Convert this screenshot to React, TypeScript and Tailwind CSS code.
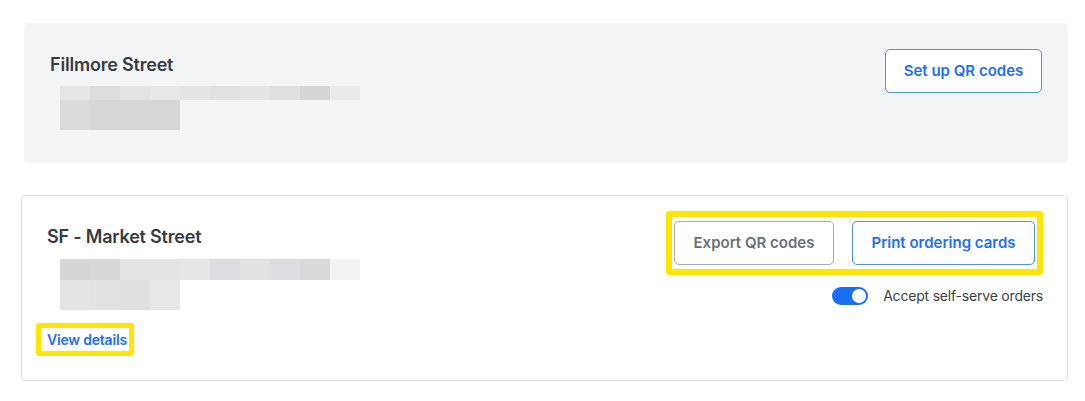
import React from "react";

const row1a = ["#e4e5e7", "#dcdddf", "#e3e4e6", "#e6e7e9", "#e3e4e6", "#e0e1e3", "#e3e4e6", "#dfe0e2", "#d5d6d8", "#e9eaec"];
const row2a = ["#dadbdd", "#d6d7d9", "#d6d7d9", "#d6d7d9"];
const row1b = ["#d5d6d8", "#d7d8da", "#e3e4e6", "#e3e4e6", "#e5e6e8", "#dcdde0", "#e1e2e4", "#dcdde0", "#d8d9db", "#f2f2f3"];
const row2b = ["#e3e4e6", "#e1e2e4", "#dfe0e2", "#e6e7e9"];

function Blocks({ r1, r2, h1 }: { r1: string[]; r2: string[]; h1: number }) {
  return (
    <div className="flex flex-col">
      <div className="flex">
        {r1.map((c, i) => (
          <div key={i} className="w-[30px]" style={{ backgroundColor: c, height: h1 }} />
        ))}
      </div>
      <div className="flex">
        {r2.map((c, i) => (
          <div key={i} className="w-[30px] h-[30px]" style={{ backgroundColor: c }} />
        ))}
      </div>
    </div>
  );
}

export default function App() {
  return (
    <div
      className="w-[1085px] h-[401px] bg-white pt-[23px] pl-[21px] pr-[17px]"
      style={{ fontFamily: "Inter, 'Noto Sans', sans-serif" }}
    >
      {/* Card 1 */}
      <div className="ml-[3px] h-[140px] rounded-[4px] bg-[#f4f5f7] pl-[26px] pr-[26px] pt-[26px] flex justify-between items-start">
        <div className="flex flex-col pt-[3px]">
          <div className="text-[18px] leading-[25px] font-semibold text-[#373c44] tracking-[-0.2px]">Fillmore Street</div>
          <div className="mt-[9px] ml-[10px]">
            <Blocks r1={row1a} r2={row2a} h1={14} />
          </div>
        </div>
        <button className="w-[157px] h-[44px] pt-[1px] rounded-[5px] border border-[#4d8df5] bg-white text-[15px] font-semibold text-[#1f6ff2]">
          Set up QR codes
        </button>
      </div>

      {/* Card 2 */}
      <div className="mt-[32px] h-[186px] rounded-[4px] border border-[#dcdee1] bg-white pl-[25px] pr-[24px] pt-[25px] flex justify-between items-start">
        <div className="flex flex-col pt-[3px]">
          <div className="text-[18px] leading-[25px] font-semibold text-[#373c44] tracking-[-0.2px]">SF - Market Street</div>
          <div className="mt-[10px] ml-[13px]">
            <Blocks r1={row1b} r2={row2b} h1={21} />
          </div>
          <div className="mt-[20px] self-start relative">
            <span className="block text-[14px] leading-[20px] font-semibold text-[#1f6ff2] tracking-[-0.2px]">View details</span>
            <div className="absolute -left-[11px] -right-[7px] -top-[7px] -bottom-[6px] border-[5px] border-[#ffe600] rounded-[3px] pointer-events-none" />
          </div>
        </div>
        <div className="flex flex-col items-end">
          <div className="relative mr-[8px] flex gap-[18px]">
            <button className="w-[160px] h-[44px] pt-[1px] rounded-[5px] border border-[#a9acb1] bg-white text-[15px] font-semibold text-[#6b6f75]">
              Export QR codes
            </button>
            <button className="w-[183px] h-[44px] pt-[1px] rounded-[5px] border border-[#4d8df5] bg-white text-[15px] font-semibold text-[#1f6ff2]">
              Print ordering cards
            </button>
            <div className="absolute -left-[8px] -right-[8px] -top-[10px] -bottom-[10px] border-[6px] border-[#ffe600] rounded-[3px] pointer-events-none" />
          </div>
          <div className="mt-[21px] flex items-center gap-[15px]">
            <div className="w-[36px] h-[18px] rounded-full bg-[#1b6ff5] flex items-center justify-end pr-[2px]">
              <div className="w-[14px] h-[14px] rounded-full bg-white" />
            </div>
            <span className="text-[14px] leading-[20px] text-[#3d4249] tracking-[-0.2px]">Accept self-serve orders</span>
          </div>
        </div>
      </div>
    </div>
  );
}
